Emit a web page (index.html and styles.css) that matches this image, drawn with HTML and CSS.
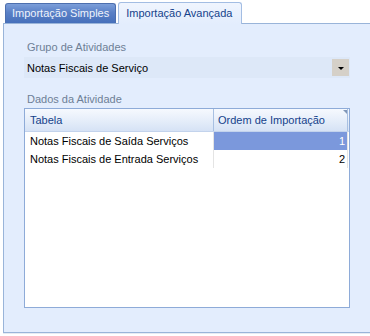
FILE: index.html
```html
<!DOCTYPE html>
<html lang="pt-BR">
<head>
    <meta charset="UTF-8">
    <title>Importação</title>
    <link rel="stylesheet" href="styles.css">
</head>
<body>
    <div class="tabs">
        <div class="tab">Importação Simples</div>
        <div class="tab active">Importação Avançada</div>
    </div>
    <div class="panel">
        <div class="field-label">Grupo de Atividades</div>
        <div class="combo">
            <span class="combo-text">Notas Fiscais de Serviço</span>
            <span class="combo-btn"><span class="arrow"></span></span>
        </div>

        <div class="field-label second">Dados da Atividade</div>
        <div class="grid">
            <div class="grid-header">
                <div class="cell col-name">Tabela</div>
                <div class="cell col-order">Ordem de Importação</div>
                <span class="corner"></span>
            </div>
            <div class="grid-row">
                <div class="cell col-name">Notas Fiscais de Saída Serviços</div>
                <div class="cell col-order num selected">1</div>
            </div>
            <div class="grid-row">
                <div class="cell col-name">Notas Fiscais de Entrada Serviços</div>
                <div class="cell col-order num">2</div>
            </div>
        </div>
    </div>
</body>
</html>
```

FILE: styles.css
```css
body {
    margin: 0;
    background-color: #fff;
    font-family: Tahoma, "Liberation Sans", Arial, sans-serif;
    font-size: 11px;
    width: 370px;
    height: 336px;
    overflow: hidden;
}

.tabs { display: flex; align-items: flex-end; height: 23px; padding-left: 5px; gap: 2px; position: relative; z-index: 1; }
.tab {
    flex: none;
    white-space: nowrap;
    height: 19px;
    padding: 0 6px;
    line-height: 19px;
    color: #eef3fc;
    background: linear-gradient(#7c9ed9, #5a80c6 45%, #4670bb);
    border: 1px solid #4d6fae;
    border-bottom: none;
    border-radius: 3px 3px 0 0;
}
.tab.active {
    height: 21px;
    line-height: 20px;
    color: #15428b;
    background: linear-gradient(#f0f5fe, #e3edfd);
    border-color: #a3bde3;
    margin-bottom: -1px;
    padding: 0 9px 0 7px;
}

.panel {
    margin-left: 3px;
    height: 308px;
    background-color: #e3edfd;
    border: 1px solid #99b4d9;
    border-right: none;
    padding: 0 20px;
    box-shadow: 0 1px 0 #e6ebf2;
}

.field-label { color: #6e7f96; margin: 15px 0 0 3px; height: 16px; line-height: 16px; }
.field-label.second { margin-top: 13px; }

.combo {
    display: flex;
    align-items: center;
    justify-content: space-between;
    height: 21px;
    margin-top: 2px;
    background-color: #dde8f8;
    padding: 0 1px 0 3px;
}
.combo-text { color: #000; }
.combo-btn {
    width: 17px;
    height: 17px;
    background-color: #d5d0c8;
    display: flex;
    align-items: center;
    justify-content: center;
}
.arrow {
    width: 0;
    height: 0;
    border-left: 3px solid transparent;
    border-right: 3px solid transparent;
    border-top: 3px solid #000;
    margin-top: 2px;
}

.grid {
    margin-top: 1px;
    height: 198px;
    background-color: #fff;
    border: 1px solid #8eabd8;
}
.grid-header {
    display: flex;
    height: 22px;
    position: relative;
    background: linear-gradient(#f6f9fe, #e3ecf9 60%, #d6e2f5);
    border-bottom: 1px solid #c3d3ec;
    color: #15428b;
}
.grid-header .cell { line-height: 22px; border-right: 1px solid #a8c0e2; }
.corner {
    position: absolute;
    right: 2px;
    top: 1px;
    width: 0;
    height: 0;
    border-top: 4px solid #8197b8;
    border-left: 4px solid transparent;
}
.grid-row { display: flex; height: 18px; }
.grid-row .cell { line-height: 18px; color: #000; border-right: 1px solid #e4e4e4; }
.cell { box-sizing: border-box; padding: 0 4px; white-space: nowrap; }
.col-name { width: 189px; padding-left: 5px; }
.col-order { width: 134px; }
.num { text-align: right; padding-right: 2px; }
.selected { background-color: #7b98dc; color: #fff !important; }
```
